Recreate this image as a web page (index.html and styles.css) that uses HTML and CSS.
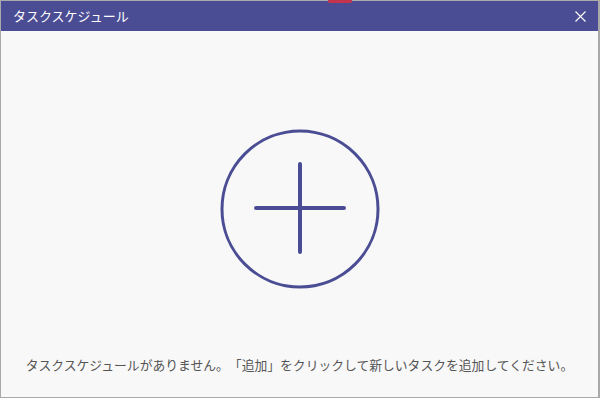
FILE: index.html
```html
<!DOCTYPE html>
<html lang="ja">
<head>
  <meta charset="UTF-8">
  <meta name="viewport" content="width=device-width, initial-scale=1.0">
  <title>タスクスケジュール</title>
  <link rel="stylesheet" href="styles.css">
</head>
<body>
  <div class="dialog">
    <div class="dialog-header">
      <span class="dialog-mark"></span>
      <p class="dialog-title">タスクスケジュール</p>
      <div class="dialog-close">
        <svg width="11" height="11" viewBox="0 0 11 11">
          <path d="M0.5 0.5 L10.5 10.5 M10.5 0.5 L0.5 10.5" stroke="#fff" stroke-width="1.1" fill="none"/>
        </svg>
      </div>
    </div>
    <div class="dialog-body">
      <div class="add-button">
        <svg width="160" height="160" viewBox="0 0 160 160">
          <circle cx="80" cy="80" r="78" stroke="#4b4d94" stroke-width="3" fill="none"/>
          <path d="M36 79 L124 79 M80 35 L80 123" stroke="#4b4d94" stroke-width="4" stroke-linecap="round" fill="none"/>
        </svg>
      </div>
      <p class="empty-text">タスクスケジュールがありません。「追加」をクリックして新しいタスクを追加してください。</p>
    </div>
  </div>
</body>
</html>
```

FILE: styles.css
```css
* {
  margin: 0;
  padding: 0;
  box-sizing: border-box;
}
body {
  width: 600px;
  height: 398px;
  font-family: "Noto Sans CJK JP", "Noto Sans", sans-serif;
  background-color: #f8f8f8;
}
.dialog {
  width: 600px;
  height: 398px;
  display: flex;
  flex-direction: column;
  border: 1px solid #a9a9a9;
  border-right-width: 2px;
  background-color: #f8f8f8;
}
.dialog-header {
  position: relative;
  height: 30px;
  flex-shrink: 0;
  display: flex;
  align-items: center;
  justify-content: space-between;
  padding: 0 11px 0 12px;
  background-color: #4b4d94;
}
.dialog-mark {
  position: absolute;
  top: -1px;
  left: 327px;
  width: 24px;
  height: 3px;
  background-color: #c4344c;
  border-radius: 0 0 2px 2px;
}
.dialog-title {
  font-size: 13px;
  color: #fff;
  line-height: 30px;
}
.dialog-close {
  width: 14px;
  height: 14px;
  display: flex;
  align-items: center;
  justify-content: center;
  cursor: pointer;
}
.dialog-body {
  flex: 1;
  display: flex;
  flex-direction: column;
  align-items: center;
}
.add-button {
  margin-top: 98px;
  width: 160px;
  height: 160px;
  cursor: pointer;
}
.empty-text {
  margin-top: 66px;
  font-size: 12.8px;
  color: #555;
  text-spacing-trim: space-all;
  font-feature-settings: normal;
}
```
